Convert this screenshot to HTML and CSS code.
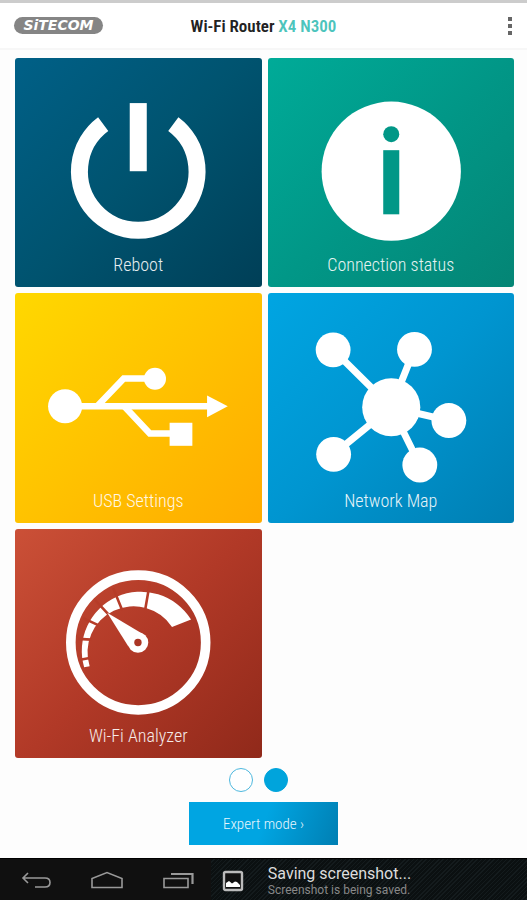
FILE: index.html
```
<!DOCTYPE html>
<html lang="en">

<head>
    <meta charset="UTF-8">
    <meta name="viewport" content="width=device-width, initial-scale=1.0">
    <title>Wi-Fi Router X4 N300</title>
    <link rel="stylesheet" href="styles.css">
</head>

<body>
    <header class="top-bar">
        <a href="#" class="logo">SiTECOM</a>
        <h1 class="title">Wi-Fi Router <span class="model">X4 N300</span></h1>
        <button class="menu-button" aria-label="Menu">
            <svg width="6" height="20" viewBox="0 0 6 20" fill="#666">
                <rect x="1" y="1" width="4" height="4" />
                <rect x="1" y="8" width="4" height="4" />
                <rect x="1" y="15" width="4" height="4" />
            </svg>
        </button>
    </header>

    <main>
        <div class="tiles">
            <button class="tile reboot">
                <svg viewBox="0 0 246 194">
                    <path d="M88 66A58.7 58.7 0 1 0 158 66" fill="none" stroke="#fff" stroke-width="17" />
                    <rect x="114.5" y="45" width="17" height="68" fill="#fff" />
                </svg>
                <span class="label">Reboot</span>
            </button>

            <button class="tile status">
                <svg viewBox="0 0 246 194">
                    <circle cx="123" cy="113" r="69.5" fill="#fff" />
                    <circle cx="123" cy="76" r="8" fill="#019787" />
                    <rect x="115" y="92" width="16" height="64" fill="#019787" />
                </svg>
                <span class="label">Connection status</span>
            </button>

            <button class="tile usb">
                <svg viewBox="0 0 246 194">
                    <g fill="none" stroke="#fff" stroke-width="6.5">
                        <path d="M50 113H194" />
                        <path d="M82 113L108.5 85.3H140" />
                        <path d="M109 113L134.5 140.3H156" />
                    </g>
                    <g fill="#fff">
                        <circle cx="50" cy="113" r="17" />
                        <circle cx="139.7" cy="85.5" r="11" />
                        <rect x="154.3" y="129.5" width="22.7" height="23" />
                        <path d="M191.7 102.2L212.3 113L191.7 124Z" />
                    </g>
                </svg>
                <span class="label">USB Settings</span>
            </button>

            <button class="tile network">
                <svg viewBox="0 0 246 194">
                    <path d="M123 114L65 56.7M123 114L146 56.3M123 114L180.5 127.3M123 114L151.5 171.7M123 114L65.5 161"
                        stroke="#fff" stroke-width="7" />
                    <g fill="#fff">
                        <circle cx="123" cy="114" r="29" />
                        <circle cx="65" cy="56.7" r="17.4" />
                        <circle cx="146.2" cy="56.3" r="17.4" />
                        <circle cx="180.5" cy="127.3" r="17.4" />
                        <circle cx="151.5" cy="171.7" r="17.4" />
                        <circle cx="65.5" cy="161" r="17.4" />
                    </g>
                </svg>
                <span class="label">Network Map</span>
            </button>

            <button class="tile analyzer">
                <svg viewBox="0 0 246 194">
                    <circle cx="123" cy="113.3" r="67.3" fill="none" stroke="#fff" stroke-width="9.6" />
                    <path d="M69 138A59 59 0 0 1 175.7 90.3L156.7 97.7A46 46 0 0 0 74.5 137Z" fill="#fff" />
                    <path d="M134.5 54L130 80M98 59L107 81M80 71L94 86M68 89L83 96M63 109.7L76 110.4M65 130.5L76 128.5"
                        stroke="#b63c28" stroke-width="2.6" />
                    <path d="M92 83.5L125.5 103.5L113 117Z" fill="#fff" />
                    <circle cx="122.7" cy="113.3" r="10.3" fill="#fff" />
                    <circle cx="122.7" cy="113.3" r="3.7" fill="#ab3625" />
                </svg>
                <span class="label">Wi-Fi Analyzer</span>
            </button>
        </div>

        <div class="pager">
            <button class="dot" aria-label="Page 1"></button>
            <button class="dot active" aria-label="Page 2"></button>
        </div>

        <button class="expert-button">Expert mode ›</button>
    </main>

    <footer class="system-bar">
        <div class="nav-keys">
            <button aria-label="Back">
                <svg width="32" height="20" viewBox="0 0 32 20" fill="none" stroke="#999" stroke-width="1.6">
                    <path d="M8 2L3 7L8 12M3 7H25Q30 7 30 11.500Q30 16 25 16H15" />
                </svg>
            </button>
            <button aria-label="Home">
                <svg width="34" height="20" viewBox="0 0 34 20" fill="none" stroke="#999" stroke-width="1.6">
                    <path d="M2 16.500V7.500L17 1.500L32 7.500V16.500Z" />
                </svg>
            </button>
            <button aria-label="Recent apps">
                <svg width="32" height="20" viewBox="0 0 32 20" fill="none" stroke="#999" stroke-width="1.6">
                    <path d="M2 7.500H26V16.500H2Z" />
                    <path d="M9 3H30.500V13" stroke-width="2.2" />
                </svg>
            </button>
        </div>
        <div class="notice">
            <svg width="22" height="22" viewBox="0 0 22 22">
                <rect x="2" y="2" width="18" height="18" rx="1.500" fill="#111" stroke="#bbb" stroke-width="2.4" />
                <path d="M4 17V13L7 11L10 13.500L13 11.500L15 12L18 15V17Z" fill="#fff" />
            </svg>
            <div class="notice-text">
                <p class="notice-title">Saving screenshot...</p>
                <p class="notice-info">Screenshot is being saved.</p>
            </div>
        </div>
    </footer>
</body>

</html>
```
FILE: styles.css
```
* {
    box-sizing: border-box;
    margin: 0;
    padding: 0;
}

body {
    font-family: 'Roboto Condensed', 'Liberation Sans Narrow', Roboto, sans-serif;
    background-color: #fdfdfd;
    min-height: 100vh;
    display: flex;
    flex-direction: column;
}

button {
    font-family: inherit;
    border: none;
    background: none;
    cursor: pointer;
}

svg {
    display: block;
}

/* header */
.top-bar {
    display: grid;
    grid-template-columns: 1fr auto 1fr;
    align-items: center;
    height: 50px;
    padding: 0 14px;
    background-color: #fff;
    border-top: 3px solid #ccc;
    border-bottom: 2px solid #f7f7f7;
}

.logo {
    justify-self: start;
    width: 89px;
    border-radius: 9px;
    background-color: #858585;
    color: #fff;
    font-family: 'DejaVu Sans', sans-serif;
    font-size: 14px;
    font-weight: bold;
    font-style: italic;
    line-height: 17px;
    text-align: center;
    text-decoration: none;
}

.title {
    font-size: 17px;
    font-weight: 600;
    color: #222;
}

.model {
    color: #4cc4bc;
}

.menu-button {
    justify-self: end;
}

/* tiles */
.tiles {
    display: grid;
    grid-template-columns: 1fr 1fr;
    gap: 6px;
    padding: 8px 13px 0 15px;
}

.tile {
    display: flex;
    flex-direction: column;
    padding-bottom: 10px;
    border-radius: 3px;
    color: #fff;
}

.tile svg {
    width: 100%;
}

.label {
    width: 100%;
    font-size: 18px;
    font-weight: 300;
    line-height: 25px;
    text-align: center;
    opacity: 0.9;
}

.reboot {
    background: linear-gradient(135deg, #006087, #00536f 50%, #003f57);
}

.status {
    background: linear-gradient(135deg, #00ab98, #019787 50%, #048575);
}

.usb {
    background: linear-gradient(135deg, #ffd800, #ffc200 50%, #ffab00);
}

.network {
    background: linear-gradient(135deg, #00a5e2, #0095d0 50%, #007fb3);
}

.analyzer {
    background: linear-gradient(135deg, #cb5037, #b13927 50%, #90291a);
}

/* page dots */
.pager {
    display: flex;
    justify-content: center;
    gap: 11px;
    padding: 10px 10px 10px 0;
}

.dot {
    width: 24px;
    height: 24px;
    border: 1px solid #4db8de;
    border-radius: 50%;
    background-color: #fff;
}

.dot.active {
    border-color: #00a4dc;
    background-color: #00a4dc;
}

.expert-button {
    display: block;
    min-width: 149px;
    height: 43px;
    margin: 0 auto 13px;
    background: linear-gradient(110deg, #00a5e2 50%, #007fb3);
    color: #e5f6fd;
    font-size: 15px;
    font-weight: 300;
}

/* android bar */
.system-bar {
    display: flex;
    height: 42px;
    margin-top: auto;
    background-color: #101010;
    border-top: 1px solid #000;
}

.nav-keys {
    width: 40%;
    display: flex;
    justify-content: space-between;
    align-items: center;
    padding: 2px 17px 0 20px;
}

.notice {
    flex: 1;
    display: flex;
    align-items: center;
    gap: 24px;
    padding: 2px 0 0 11px;
    background: repeating-linear-gradient(135deg, #0b1011 0 2px, #141b1d 2px 3px);
    font-family: Roboto, sans-serif;
}

.notice-title {
    font-size: 16px;
    line-height: 18px;
    color: #ddd;
}

.notice-info {
    font-size: 12px;
    line-height: 14px;
    color: #888;
}
```
